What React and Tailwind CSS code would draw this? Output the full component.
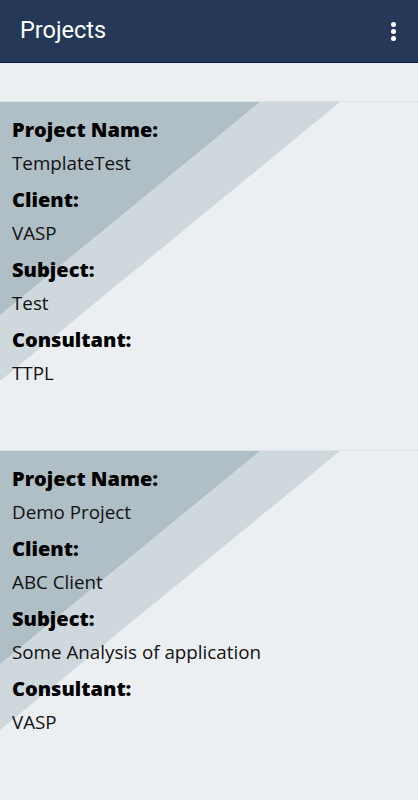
import React from 'react';

const PROJECTS = [
  { name: 'TemplateTest', client: 'VASP', subject: 'Test', consultant: 'TTPL' },
  { name: 'Demo Project', client: 'ABC Client', subject: 'Some Analysis of application', consultant: 'VASP' },
];

const Field = ({ label, value }) => (
  <div>
    <div className="text-[20px] leading-[34px] font-extrabold text-black">{label}</div>
    <div className="text-[18.8px] leading-[32px] mb-1 text-[#111]">{value}</div>
  </div>
);

const ProjectCard = ({ p }) => (
  <div className="relative h-[349px] border-t border-[#dde2e6] bg-[#eceff1] overflow-hidden">
    {/* diagonal decoration */}
    <svg className="absolute top-0 left-0" width="418" height="300" viewBox="0 0 418 300">
      <polygon points="260,0 340,0 0,279 0,213" fill="#cfd8dc" />
      <polygon points="0,0 260,0 0,213" fill="#b0bec5" />
    </svg>
    <div className="relative px-3 pt-[11px]">
      <Field label="Project Name:" value={p.name} />
      <Field label="Client:" value={p.client} />
      <Field label="Subject:" value={p.subject} />
      <Field label="Consultant:" value={p.consultant} />
    </div>
  </div>
);

export default function App() {
  return (
    <div className="w-[418px] h-[800px] overflow-hidden bg-[#eceff1] font-['Open_Sans',sans-serif]">
      <header className="h-[63px] bg-[#253858] border-b border-[#0d1b4a] flex items-center justify-between pl-5 pr-[22px]">
        <h1 className="text-white text-[23.5px] font-['Roboto',sans-serif] font-normal">Projects</h1>
        <button className="flex flex-col items-center gap-[2px]">
          <span className="w-[5px] h-[5px] rounded-full bg-white" />
          <span className="w-[5px] h-[5px] rounded-full bg-white" />
          <span className="w-[5px] h-[5px] rounded-full bg-white" />
        </button>
      </header>
      <div className="h-[38px]" />
      {PROJECTS.map((p) => (
        <ProjectCard key={p.name} p={p} />
      ))}
    </div>
  );
}
